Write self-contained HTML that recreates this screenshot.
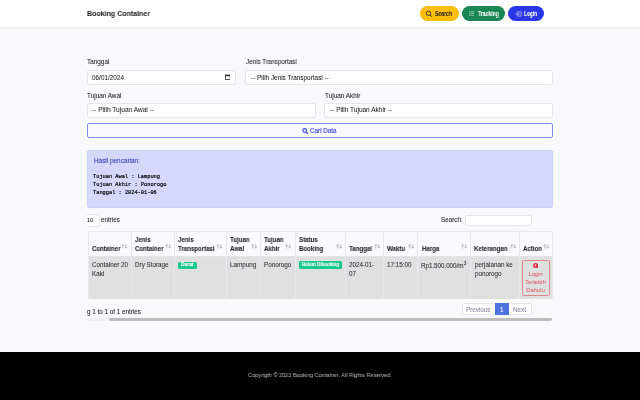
<!DOCTYPE html>
<html><head><meta charset="utf-8">
<style>
*{margin:0;padding:0;box-sizing:border-box}
html,body{width:640px;height:400px;overflow:hidden}
body{position:relative;background:#f8f9fa;font-family:"Liberation Sans",sans-serif;color:#212529}
.a{position:absolute}
.t{position:absolute;white-space:nowrap;line-height:1;-webkit-text-stroke:0.06px currentColor;will-change:transform;transform-origin:0 0}
.nav{left:0;top:0;width:640px;height:27px;background:#fff}
.navb{left:0;top:26.6px;width:640px;height:2.2px;background:#eeefef}
.btn{position:absolute;border-radius:8px;top:6.2px;height:14.6px}
.inp{position:absolute;background:#fff;border:1px solid #e4e6ea;border-radius:2px}
.lbl{font-size:6.4px;color:#212529}
.th{font-weight:700;font-size:6.6px;color:#212529;transform:scaleX(0.925)}
.td{font-size:6.3px;color:#2b2d31}
.sort{position:absolute;top:244px;width:6.5px;height:4.8px}
.vl{position:absolute;top:231.2px;width:1px;height:67.5px;background:#e8e9ec}
</style></head><body>
<!-- navbar -->
<div class="a nav"></div>
<div class="a navb"></div>
<div class="t" style="left:87px;top:10.4px;font-size:8px;font-weight:700;transform:scaleX(0.88);color:#212529">Booking Container</div>

<div class="btn" style="left:419.7px;width:39.3px;background:#fdbf0c"></div>
<svg class="a" style="left:425px;top:9.5px" width="8" height="8" viewBox="0 0 8 8"><circle cx="3.5" cy="3.3" r="2.15" fill="none" stroke="#222" stroke-width="0.85"/><line x1="5.1" y1="4.9" x2="6.8" y2="6.7" stroke="#222" stroke-width="1"/></svg>
<div class="t" style="left:435.3px;top:11px;font-size:6.4px;font-weight:700;transform:scaleX(0.8);color:#1e1e1e">Search</div>

<div class="btn" style="left:462px;width:43.2px;background:#198754"></div>
<svg class="a" style="left:468.7px;top:10.9px" width="5.5" height="5.2" viewBox="0 0 5.5 5.2"><rect x="0" y="0" width="5.4" height="5.1" fill="rgba(255,255,255,0.12)"/><g fill="rgba(255,255,255,0.42)"><rect x="0" y="0.4" width="1.2" height="0.8"/><rect x="0" y="2.2" width="1.2" height="0.8"/><rect x="0" y="4" width="1.2" height="0.8"/><rect x="1.8" y="0.4" width="3.6" height="0.8"/><rect x="1.8" y="2.2" width="3.6" height="0.8"/><rect x="1.8" y="4" width="3.6" height="0.8"/></g></svg>
<div class="t" style="left:478px;top:11px;font-size:6.4px;font-weight:700;transform:scaleX(0.79);color:#fff">Tracking</div>

<div class="btn" style="left:508.1px;width:35.7px;background:#2b37e6"></div>
<svg class="a" style="left:514.5px;top:10.5px" width="7" height="6" viewBox="0 0 7 6"><path d="M2 1.8 V0.85 H6.2 V5.05 H2 V4.2" fill="none" stroke="rgba(235,238,255,0.85)" stroke-width="0.65"/><path d="M0.2 3 H4.2 M3 1.8 L4.2 3 L3 4.2" fill="none" stroke="#e8eaff" stroke-width="0.65"/></svg>
<div class="t" style="left:524px;top:11px;font-size:6.4px;font-weight:700;transform:scaleX(0.75);color:#fff">Login</div>

<!-- form -->
<div class="t lbl" style="left:87px;top:59.4px">Tanggal</div>
<div class="inp" style="left:86.8px;top:70px;width:149.6px;height:14.5px"></div>
<div class="t lbl" style="left:91.9px;top:74.7px">06/01/2024</div>
<svg class="a" style="left:224.8px;top:74.2px" width="5.6" height="6" viewBox="0 0 5.6 6"><rect x="0.45" y="1.05" width="4.7" height="4.5" fill="none" stroke="#222" stroke-width="0.75"/><rect x="0.45" y="1.05" width="4.7" height="1.1" fill="#222"/><rect x="1.4" y="0.4" width="0.5" height="0.7" fill="#999"/><rect x="3.7" y="0.4" width="0.5" height="0.7" fill="#999"/></svg>

<div class="t lbl" style="left:245.5px;top:59.4px;transform:scaleX(0.975)">Jenis Transportasi</div>
<div class="inp" style="left:245.1px;top:70px;width:308px;height:14.5px"></div>
<div class="t lbl" style="left:250.6px;top:74.7px">-- Pilih Jenis Transportasi --</div>

<div class="t lbl" style="left:87px;top:92.8px">Tujuan Awal</div>
<div class="inp" style="left:86.8px;top:102.7px;width:229px;height:15px"></div>
<div class="t lbl" style="left:91.8px;top:107.4px;font-size:6.58px">-- Pilih Tujuan Awal --</div>

<div class="t lbl" style="left:325px;top:92.8px">Tujuan Akhir</div>
<div class="inp" style="left:324.2px;top:102.7px;width:228.9px;height:15px"></div>
<div class="t lbl" style="left:329.7px;top:107.4px;font-size:6.5px">-- Pilih Tujuan Akhir --</div>

<div class="a" style="left:87px;top:123.2px;width:465.8px;height:14.5px;border:1px solid #858bf4;border-radius:2px"></div>
<svg class="a" style="left:302px;top:127.6px" width="6.6" height="6.4" viewBox="0 0 6.6 6.4"><circle cx="2.7" cy="2.6" r="1.85" fill="none" stroke="#474de0" stroke-width="1.25"/><line x1="4" y1="4" x2="5.9" y2="5.8" stroke="#474de0" stroke-width="1.4"/></svg>
<div class="t" style="left:310.2px;top:127.8px;font-size:6.3px;color:#4348de;-webkit-text-stroke:0.15px #4348de">Cari Data</div>

<!-- alert -->
<div class="a" style="left:87px;top:150px;width:465.8px;height:58.3px;background:#d5d7fb;border:1px solid #cdd0fa;border-radius:2px"></div>
<div class="t" style="left:93.7px;top:158.4px;font-size:6.4px;color:#2d34a8">Hasil pencarian:</div>
<div class="t" style="left:92.9px;top:173.9px;font-size:5.32px;font-weight:400;font-family:'Liberation Mono',monospace;color:#000;-webkit-text-stroke:0.2px #000;line-height:7.75px;white-space:pre">Tujuan Awal : Lampung
Tujuan Akhir : Ponorogo
Tanggal : 2024-01-06</div>

<!-- datatable controls -->
<div class="a" style="overflow:hidden;left:86.8px;top:214px;width:13.2px;height:12.6px">
  <div class="inp" style="left:-12px;top:0;width:25.2px;height:12.6px"></div>
  <div class="t td" style="left:-0.3px;top:4px;font-size:5.6px;color:#222">10</div>
</div>
<div class="t td" style="left:101px;top:216.7px;color:#222">entries</div>
<div class="t td" style="left:440.8px;top:216.8px;color:#222">Search:</div>
<div class="inp" style="left:464.5px;top:214.5px;width:67.1px;height:11.8px"></div>

<!-- table -->
<div class="a" style="left:87.5px;top:231.2px;width:465.3px;height:25px;background:#f9fafb;border-top:1px solid #e9eaed"></div>
<div class="a" style="left:87.5px;top:256.2px;width:465.3px;height:42.5px;background:#dfe0e0"></div>
<div class="a" style="left:87.5px;top:255.6px;width:465.3px;height:1px;background:#e3e4e6"></div>
<div class="vl" style="left:88px;top:232px;height:66.7px"></div>
<div class="vl" style="left:131px"></div>
<div class="vl" style="left:173.8px"></div>
<div class="vl" style="left:226.3px"></div>
<div class="vl" style="left:260.1px"></div>
<div class="vl" style="left:295.1px"></div>
<div class="vl" style="left:345.1px"></div>
<div class="vl" style="left:382.9px"></div>
<div class="vl" style="left:417.2px"></div>
<div class="vl" style="left:470px"></div>
<div class="vl" style="left:519px"></div>
<div class="vl" style="left:552.3px"></div>

<!-- header texts -->
<div class="t th" style="left:91.9px;top:246.4px">Container</div>
<div class="t th" style="left:135px;top:236.5px">Jenis</div>
<div class="t th" style="left:135px;top:246.4px">Container</div>
<div class="t th" style="left:177.9px;top:236.5px">Jenis</div>
<div class="t th" style="left:177.9px;top:246.4px">Transportasi</div>
<div class="t th" style="left:230px;top:236.5px">Tujuan</div>
<div class="t th" style="left:230px;top:246.4px">Awal</div>
<div class="t th" style="left:264.1px;top:236.5px">Tujuan</div>
<div class="t th" style="left:264.1px;top:246.4px">Akhir</div>
<div class="t th" style="left:299.3px;top:236.5px">Status</div>
<div class="t th" style="left:299.3px;top:246.4px">Booking</div>
<div class="t th" style="left:348.6px;top:246.4px">Tanggal</div>
<div class="t th" style="left:387.2px;top:246.4px">Waktu</div>
<div class="t th" style="left:421.6px;top:246.4px">Harga</div>
<div class="t th" style="left:474.4px;top:246.4px">Keterangan</div>
<div class="t th" style="left:523.4px;top:246.4px">Action</div>

<!-- sort icons -->

<svg class="sort" style="left:121.2px" viewBox="0 0 6.5 5"><path d="M1.7 0.5 V4.7 M0.35 1.9 L1.7 0.5 L3.05 1.9 M4.8 0.1 V4.3 M3.45 2.9 L4.8 4.3 L6.15 2.9" fill="none" stroke="#a9abb0" stroke-width="0.8"/></svg>
<svg class="sort" style="left:164.8px" viewBox="0 0 6.5 5"><path d="M1.7 0.5 V4.7 M0.35 1.9 L1.7 0.5 L3.05 1.9 M4.8 0.1 V4.3 M3.45 2.9 L4.8 4.3 L6.15 2.9" fill="none" stroke="#a9abb0" stroke-width="0.8"/></svg>
<svg class="sort" style="left:216.3px" viewBox="0 0 6.5 5"><path d="M1.7 0.5 V4.7 M0.35 1.9 L1.7 0.5 L3.05 1.9 M4.8 0.1 V4.3 M3.45 2.9 L4.8 4.3 L6.15 2.9" fill="none" stroke="#a9abb0" stroke-width="0.8"/></svg>
<svg class="sort" style="left:250.9px" viewBox="0 0 6.5 5"><path d="M1.7 0.5 V4.7 M0.35 1.9 L1.7 0.5 L3.05 1.9 M4.8 0.1 V4.3 M3.45 2.9 L4.8 4.3 L6.15 2.9" fill="none" stroke="#a9abb0" stroke-width="0.8"/></svg>
<svg class="sort" style="left:285.4px" viewBox="0 0 6.5 5"><path d="M1.7 0.5 V4.7 M0.35 1.9 L1.7 0.5 L3.05 1.9 M4.8 0.1 V4.3 M3.45 2.9 L4.8 4.3 L6.15 2.9" fill="none" stroke="#a9abb0" stroke-width="0.8"/></svg>
<svg class="sort" style="left:335.5px" viewBox="0 0 6.5 5"><path d="M1.7 0.5 V4.7 M0.35 1.9 L1.7 0.5 L3.05 1.9 M4.8 0.1 V4.3 M3.45 2.9 L4.8 4.3 L6.15 2.9" fill="none" stroke="#a9abb0" stroke-width="0.8"/></svg>
<svg class="sort" style="left:373.5px" viewBox="0 0 6.5 5"><path d="M1.7 0.5 V4.7 M0.35 1.9 L1.7 0.5 L3.05 1.9 M4.8 0.1 V4.3 M3.45 2.9 L4.8 4.3 L6.15 2.9" fill="none" stroke="#a9abb0" stroke-width="0.8"/></svg>
<svg class="sort" style="left:407.8px" viewBox="0 0 6.5 5"><path d="M1.7 0.5 V4.7 M0.35 1.9 L1.7 0.5 L3.05 1.9 M4.8 0.1 V4.3 M3.45 2.9 L4.8 4.3 L6.15 2.9" fill="none" stroke="#a9abb0" stroke-width="0.8"/></svg>
<svg class="sort" style="left:460.5px" viewBox="0 0 6.5 5"><path d="M1.7 0.5 V4.7 M0.35 1.9 L1.7 0.5 L3.05 1.9 M4.8 0.1 V4.3 M3.45 2.9 L4.8 4.3 L6.15 2.9" fill="none" stroke="#a9abb0" stroke-width="0.8"/></svg>
<svg class="sort" style="left:509.5px" viewBox="0 0 6.5 5"><path d="M1.7 0.5 V4.7 M0.35 1.9 L1.7 0.5 L3.05 1.9 M4.8 0.1 V4.3 M3.45 2.9 L4.8 4.3 L6.15 2.9" fill="none" stroke="#a9abb0" stroke-width="0.8"/></svg>
<svg class="sort" style="left:543px" viewBox="0 0 6.5 5"><path d="M1.7 0.5 V4.7 M0.35 1.9 L1.7 0.5 L3.05 1.9 M4.8 0.1 V4.3 M3.45 2.9 L4.8 4.3 L6.15 2.9" fill="none" stroke="#a9abb0" stroke-width="0.8"/></svg>

<!-- body texts -->
<div class="t td" style="left:91.9px;top:261.8px">Container 20</div>
<div class="t td" style="left:91.9px;top:270.7px">Kaki</div>
<div class="t td" style="left:135px;top:261.8px">Dry Storage</div>
<div class="a" style="left:178.1px;top:261.6px;width:18.5px;height:7.4px;background:#1cc88a;border-radius:1.5px"></div>
<div class="t" style="left:181px;top:262.7px;font-size:4.9px;font-weight:700;color:#fff">Darat</div>
<div class="t td" style="left:230.1px;top:261.8px">Lampung</div>
<div class="t td" style="left:264.1px;top:261.8px">Ponorogo</div>
<div class="a" style="left:298.7px;top:261.2px;width:43px;height:7.7px;background:#1cc88a;border-radius:1.5px"></div>
<div class="t" style="left:301.9px;top:262.9px;font-size:4.5px;font-weight:700;color:#fff">Belum Dibooking</div>
<div class="t td" style="left:348.7px;top:261.8px">2024-01-</div>
<div class="t td" style="left:348.7px;top:270.7px">07</div>
<div class="t td" style="left:387.2px;top:261.8px">17:15:00</div>
<div class="t td" style="left:421.2px;top:261.8px;letter-spacing:-0.05px">Rp1.500.000/m<sup style="font-size:4.6px;vertical-align:2.6px;margin-left:0.3px">3</sup></div>
<div class="t td" style="left:474.6px;top:261.8px">perjalanan ke</div>
<div class="t td" style="left:474.6px;top:270.7px">ponorogo</div>

<div class="a" style="left:522.2px;top:260.2px;width:27.8px;height:35.6px;border:0.7px solid #e3868d;border-radius:1.5px"></div>
<svg class="a" style="left:533.1px;top:262.8px" width="5.4" height="5.4" viewBox="0 0 5.2 5.2"><circle cx="2.6" cy="2.6" r="2.5" fill="#dc3545"/><rect x="2.25" y="1.1" width="0.7" height="2" fill="#fff"/><rect x="2.25" y="3.5" width="0.7" height="0.6" fill="#fff"/></svg>
<div class="t" style="left:522.4px;width:27.2px;top:271px;font-size:5.7px;color:#e0606b;text-align:center;line-height:7.9px;letter-spacing:0.1px;white-space:pre">Login
Terlebih
Dahulu</div>

<!-- info + pagination -->
<div class="t td" style="left:86.6px;top:308.7px;color:#222">g 1 to 1 of 1 entries</div>
<div class="a" style="left:461.5px;top:302.7px;width:70px;height:12.6px;background:#fff;border:1px solid #e6e7ea;border-radius:2px"></div>
<div class="a" style="left:495px;top:302.7px;width:13.6px;height:12.6px;background:#4e73df"></div>
<div class="t td" style="left:466.2px;top:307px;color:#858796">Previous</div>
<div class="t td" style="left:500px;top:307px;color:#fff">1</div>
<div class="t td" style="left:512.8px;top:307px;color:#858796">Next</div>

<!-- scrollbar -->
<div class="a" style="left:86.5px;top:317.5px;width:466.5px;height:3.8px;background:#f1f1f1"></div>
<div class="a" style="left:109px;top:318px;width:443px;height:2.8px;background:#bdbdbd;border-radius:1.4px"></div>

<!-- footer -->
<div class="a" style="left:0;top:352.1px;width:640px;height:48px;background:#000"></div>
<div class="t" style="left:248px;top:371.9px;font-size:6.2px;color:#a8a8a8;transform:scaleX(0.9)">Copyrigth © 2023 Booking Container. All Rights Reserved.</div>
</body></html>
